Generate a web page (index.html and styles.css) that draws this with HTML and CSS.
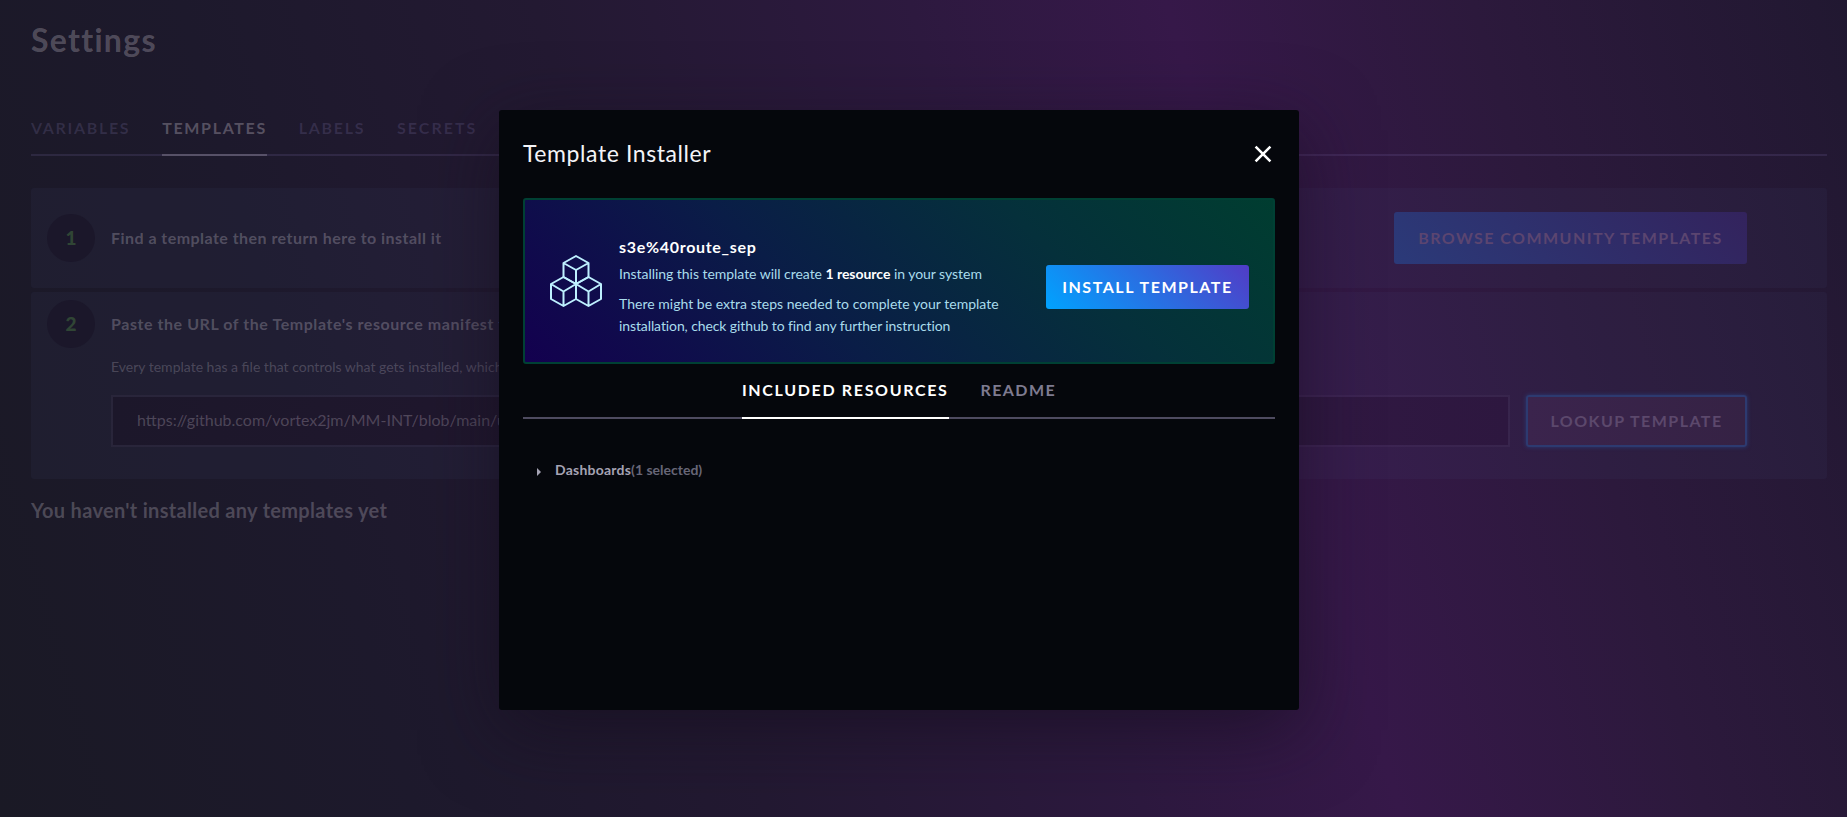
FILE: index.html
```html
<!DOCTYPE html>
<html lang="en">
<head>
<meta charset="utf-8">
<title>Settings</title>
<link rel="stylesheet" href="styles.css">
</head>
<body>
<main class="page">
  <h1 class="page-title">Settings</h1>
  <nav class="tabs page-tabs">
    <a class="tab">VARIABLES</a>
    <a class="tab active">TEMPLATES</a>
    <a class="tab">LABELS</a>
    <a class="tab">SECRETS</a>
  </nav>
  <section class="step step-find">
    <div class="number">1</div>
    <div class="step-title find-title">Find a template then return here to install it</div>
    <button class="btn browse">BROWSE COMMUNITY TEMPLATES</button>
  </section>
  <section class="step step-paste">
    <div class="number">2</div>
    <div class="step-body">
      <div class="step-title paste-title">Paste the URL of the Template's resource manifest file</div>
      <p class="hint">Every template has a file that controls what gets installed, which</p>
      <div class="lookup-row">
        <div class="url-input">https://github.com/vortex2jm/MM-INT/blob/main/u</div>
        <button class="btn lookup">LOOKUP TEMPLATE</button>
      </div>
    </div>
  </section>
  <h2 class="empty">You haven't installed any templates yet</h2>
</main>
<div class="modal">
  <header class="modal-head">
    <div class="modal-title">Template Installer</div>
    <svg class="close" width="18" height="18" viewBox="0 0 18 18"><path d="M1.6 1.6 16.4 16.4M16.4 1.6 1.6 16.4"/></svg>
  </header>
  <section class="banner">
    <svg class="cubes" width="52" height="52" viewBox="0 0 52 52">
      <path d="M26 1 38.5 8V22L26 29 13.5 22V8ZM13.5 8 26 15 38.5 8M26 15V29"/>
      <path d="M13.5 22 26 29V44L13.5 51 1 44V29ZM1 29 13.5 36.5 26 29M13.5 36.5V51"/>
      <path d="M38.5 22 51 29V44L38.5 51 26 44V29ZM26 29 38.5 36.5 51 29M38.5 36.5V51"/>
    </svg>
    <div class="banner-text">
      <div class="name">s3e%40route_sep</div>
      <p class="summary">Installing this template will create <b>1 resource</b> in your system</p>
      <p class="extra"><span>There might be extra steps needed to complete your template</span><br><span class="tight">installation, check github to find any further instruction</span></p>
    </div>
    <button class="btn install">INSTALL TEMPLATE</button>
  </section>
  <nav class="tabs modal-tabs">
    <a class="tab active">INCLUDED RESOURCES</a>
    <a class="tab">README</a>
  </nav>
  <div class="resource">
    <svg class="caret" width="4" height="8" viewBox="0 0 4 8"><path d="M0 0 4 4 0 8Z"/></svg>
    <span class="kind">Dashboards</span><span class="count">(1 selected)</span>
  </div>
</div>
</body>
</html>
```
FILE: styles.css
```css
* { box-sizing: border-box; }
body {
  margin: 0;
  height: 817px;
  overflow: hidden;
  font-family: Lato, "Open Sans", sans-serif;
  background: linear-gradient(73.9deg, #1a1925 0%, #1d192c 20%, #231932 37%, #2d193f 55%, #361849 67.3%, #2c193c 82%, #211831 100%);
}
h1, h2, p { margin: 0; }
.page { padding: 20px 20px 0 31px; }
.page-title {
  height: 40px;
  font-size: 32px;
  line-height: 40px;
  font-weight: 700;
  letter-spacing: 1.3px;
  color: rgba(255, 245, 255, .24);
}
.tabs { display: flex; gap: 32px; }
.tab {
  font-size: 16px;
  font-weight: 700;
  letter-spacing: 1.66px;
}
.page-tabs {
  height: 52px;
  margin-top: 44px;
  border-bottom: 2px solid rgba(150, 130, 200, .15);
}
.page-tabs .tab {
  height: 52px;
  line-height: 47px;
  color: rgba(150, 140, 200, .19);
}
.page-tabs .tab:last-child { letter-spacing: 2px; }
.page-tabs .active {
  color: rgba(255, 245, 255, .26);
  border-bottom: 2px solid rgba(255, 245, 255, .2);
}
.step {
  display: flex;
  border-radius: 3px;
  padding-left: 16px;
  background: rgba(90, 100, 150, .07);
}
.step-find {
  height: 100px;
  margin-top: 32px;
  align-items: center;
  padding-right: 80px;
}
.step-paste {
  height: 187px;
  margin-top: 4px;
  padding-top: 8px;
  padding-right: 80px;
}
.number {
  flex: none;
  width: 48px;
  height: 48px;
  border-radius: 50%;
  margin-right: 16px;
  text-align: center;
  font-size: 19px;
  font-weight: 900;
  line-height: 47px;
  background: #1b172a;
  color: #304535;
}
.step-title {
  font-size: 16px;
  font-weight: 700;
  color: rgba(255, 245, 255, .23);
  white-space: nowrap;
}
.find-title { letter-spacing: .46px; padding-bottom: 2px; }
.btn {
  border: 0;
  border-radius: 3px;
  padding: 0 0 2px;
  font-family: inherit;
  font-size: 16px;
  font-weight: 700;
  letter-spacing: 1.45px;
  text-align: center;
}
.browse {
  margin-left: auto;
  width: 353px;
  height: 52px;
  color: #5b4570;
  background: linear-gradient(45deg, #2b3a79, #33235d);
}
.step-body { flex: 1; }
.paste-title { line-height: 20px; margin-top: 14px; letter-spacing: .56px; }
.hint {
  margin-top: 23px;
  height: 20px;
  line-height: 20px;
  font-size: 14px;
  color: rgba(255, 245, 255, .2);
}
.lookup-row { display: flex; gap: 16px; margin-top: 18px; }
.url-input {
  flex: 1;
  height: 52px;
  padding-left: 24px;
  line-height: 46px;
  border: 2px solid rgba(130, 110, 160, .09);
  font-size: 16px;
  color: rgba(255, 245, 255, .22);
  background: linear-gradient(90deg, #1c172a, #20172e 30%, #301842 88%, #2d173f);
  background-clip: padding-box;
}
.lookup {
  width: 221px;
  height: 52px;
  border: 2px solid #2d3a70;
  box-shadow: 0 0 4px #2b3a74;
  color: #5c486c;
  background: linear-gradient(90deg, #3b244d, #352244);
}
.empty {
  margin-top: 19px;
  font-size: 20px;
  line-height: 24px;
  font-weight: 700;
  letter-spacing: .31px;
  color: rgba(255, 245, 255, .22);
}
.modal {
  position: absolute;
  left: 499px;
  top: 110px;
  width: 800px;
  height: 600px;
  padding: 0 24px;
  border-radius: 3px;
  background: #05070c;
  box-shadow: 0 20px 75px rgba(20, 14, 28, .6);
}
.modal-head {
  display: flex;
  justify-content: space-between;
  align-items: center;
  height: 88px;
  padding-right: 3px;
}
.modal-title { font-size: 23px; letter-spacing: .58px; color: #f4f4f8; line-height: 28px; margin-top: -3px; }
.close { fill: none; stroke: #fff; stroke-width: 2.6; }
.banner {
  display: flex;
  align-items: center;
  height: 166px;
  padding: 0 24px 0 25px;
  border: 2px solid #004034;
  border-radius: 3px;
  background: linear-gradient(45deg, #13004f, #0a1d47 38%, #05303b 70%, #003d30);
}
.cubes { fill: none; stroke: #bef0ff; stroke-width: 2; stroke-linejoin: round; }
.banner-text { margin-left: 17px; padding-top: 12px; width: 427px; color: #a9dcec; font-size: 14px; white-space: nowrap; }
.name { color: #fff; font-size: 16px; font-weight: 700; line-height: 20px; letter-spacing: .7px; }
.summary { line-height: 22px; margin-top: 6px; letter-spacing: -.04px; }
.summary b { color: #fff; }
.extra { line-height: 22px; margin-top: 8px; letter-spacing: .02px; }
.tight { letter-spacing: -.1px; }
.install {
  width: 203px;
  height: 44px;
  margin-top: 12px;
  color: #fff;
  letter-spacing: 1.54px;
  background: linear-gradient(45deg, #00a3ff, #513cc6);
}
.modal-tabs { height: 55px; justify-content: center; border-bottom: 2px solid #4e4b60; }
.modal-tabs .tab { height: 55px; line-height: 51px; color: #7e7b90; }
.modal-tabs .active { color: #fff; border-bottom: 2px solid #fff; }
.modal-tabs .tab + .tab { letter-spacing: 1.4px; }
.resource {
  display: flex;
  align-items: center;
  height: 20px;
  margin-top: 40px;
  padding-left: 14px;
  font-size: 14px;
  font-weight: 700;
}
.caret { fill: #a5a3b4; margin: 5px 14px 0 0; }
.kind { color: #a5a3b4; letter-spacing: .22px; }
.count { color: #676677; }
```
